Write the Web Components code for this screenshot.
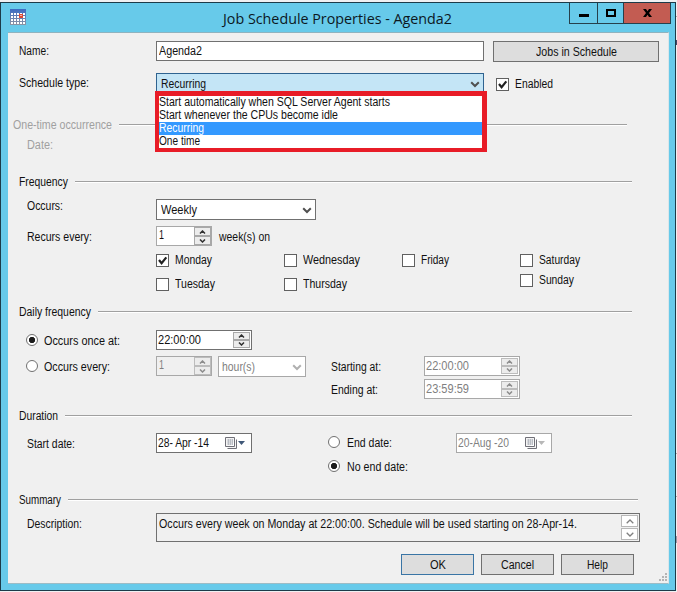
<!DOCTYPE html>
<html lang="en"><head><meta charset="utf-8"><title>Job Schedule Properties - Agenda2</title>
<style>
html,body{margin:0;width:677px;height:592px;overflow:hidden;background:#f0f0f2}
body{font:12px/16px "Liberation Sans",Arial,sans-serif;color:#111}
</style></head><body>
<dialog-window>
<title-bar slot="title"><fit-text w="229">Job Schedule Properties - Agenda2</fit-text></title-bar>
<form-row style="height:32px;margin-top:8px">
 <fit-text w="30" col="137" style="margin:2px 0 0 11px">Name:</fit-text>
 <text-box style="width:328px;height:20px"><fit-text w="43">Agenda2</fit-text></text-box>
 <push-button style="width:166px;margin-left:9px"><fit-text w="81">Jobs in Schedule</fit-text></push-button>
</form-row>
<form-row style="height:44px">
 <fit-text w="70" col="137" style="margin:2px 0 0 11px">Schedule type:</fit-text>
 <drop-down open style="width:328px"><fit-text w="45">Recurring</fit-text>
  <option-list slot="list">
   <list-option><fit-text w="231">Start automatically when SQL Server Agent starts</fit-text></list-option>
   <list-option><fit-text w="179">Start whenever the CPUs become idle</fit-text></list-option>
   <list-option selected><fit-text w="45">Recurring</fit-text></list-option>
   <list-option><fit-text w="41">One time</fit-text></list-option>
  </option-list></drop-down>
 <check-box checked style="margin:5px 0 0 12px"><fit-text w="38">Enabled</fit-text></check-box>
</form-row>
<section-head style="margin-left:5px;width:614px;color:#a0a0a0"><fit-text w="99">One-time occurrence</fit-text></section-head>
<form-row style="height:41px;color:#a0a0a0"><fit-text w="26" style="margin:4px 0 0 19px">Date:</fit-text></form-row>
<section-head><fit-text w="49">Frequency</fit-text></section-head>
<form-row style="height:27px;margin-top:9px">
 <fit-text w="36" col="129" style="margin:-1px 0 0 19px">Occurs:</fit-text>
 <drop-down style="width:160px"><fit-text w="36">Weekly</fit-text></drop-down>
</form-row>
<form-row style="height:28px">
 <fit-text w="65" col="129" style="margin:3px 0 0 19px">Recurs every:</fit-text>
 <spin-box class="num"><fit-text w="5">1</fit-text></spin-box>
 <fit-text w="51" style="margin:3px 0 0 7px">week(s) on</fit-text>
</form-row>
<day-grid style="margin-left:148px">
 <check-box checked><fit-text w="37">Monday</fit-text></check-box>
 <check-box><fit-text w="57">Wednesday</fit-text></check-box>
 <check-box><fit-text w="28">Friday</fit-text></check-box>
 <check-box><fit-text w="41">Saturday</fit-text></check-box>
 <check-box style="margin-top:4px"><fit-text w="40">Tuesday</fit-text></check-box>
 <check-box style="margin-top:4px"><fit-text w="44">Thursday</fit-text></check-box>
 <span></span>
 <check-box><fit-text w="35">Sunday</fit-text></check-box>
</day-grid>
<section-head><fit-text w="72">Daily frequency</fit-text></section-head>
<form-row style="height:26px;margin-top:10px">
 <radio-button checked style="width:130px;margin:2px 0 0 18px"><fit-text w="76">Occurs once at:</fit-text></radio-button>
 <spin-box class="time"><fit-text w="43">22:00:00</fit-text></spin-box>
</form-row>
<form-row style="height:23px">
 <radio-button style="width:130px;margin:2px 0 0 18px"><fit-text w="66">Occurs every:</fit-text></radio-button>
 <spin-box class="num" disabled style="--fill:#f0f0f0"><fit-text w="5">1</fit-text></spin-box>
 <drop-down disabled style="width:88px;margin-left:6px"><fit-text w="33">hour(s)</fit-text></drop-down>
 <fit-text w="50" col="93" style="margin:3px 0 0 25px">Starting at:</fit-text>
 <spin-box class="time" disabled><fit-text w="43">22:00:00</fit-text></spin-box>
</form-row>
<form-row style="height:29px">
 <fit-text w="47" col="93" style="margin:3px 0 0 323px">Ending at:</fit-text>
 <spin-box class="time" disabled><fit-text w="43">23:59:59</fit-text></spin-box>
</form-row>
<section-head><fit-text w="39">Duration</fit-text></section-head>
<form-row style="height:25px;margin-top:9px">
 <fit-text w="48" col="129" style="margin:3px 0 0 19px">Start date:</fit-text>
 <date-box><fit-text w="51">28- Apr -14</fit-text></date-box>
 <radio-button style="width:128px;margin:1px 0 0 76px;--gap:7px"><fit-text w="45">End date:</fit-text></radio-button>
 <date-box disabled><fit-text w="51">20-Aug -20</fit-text></date-box>
</form-row>
<form-row style="height:34px"><radio-button checked style="margin:0 0 0 320px;--gap:7px"><fit-text w="61">No end date:</fit-text></radio-button></form-row>
<section-head style="width:619px"><fit-text w="42">Summary</fit-text></section-head>
<form-row style="height:41px;margin-top:5px">
 <fit-text w="55" col="129" style="margin:3px 0 0 19px">Description:</fit-text>
 <summary-box><fit-text w="418">Occurs every week on Monday at 22:00:00. Schedule will be used starting on 28-Apr-14.</fit-text></summary-box>
</form-row>
<form-row style="gap:7px;margin-left:393px">
 <push-button default style="width:73px"><fit-text w="16">OK</fit-text></push-button>
 <push-button style="width:73px"><fit-text w="33">Cancel</fit-text></push-button>
 <push-button style="width:73px"><fit-text w="21">Help</fit-text></push-button>
</form-row>
</dialog-window>
<script>
const define=(name,css,html,ready)=>customElements.define(name,class extends HTMLElement{
 constructor(){super();this.attachShadow({mode:'open'}).innerHTML=`<style>*{box-sizing:border-box}:host{box-sizing:border-box}${css}</style>${html}`}
 connectedCallback(){if(ready)ready(this,this.shadowRoot)}
});
const chevron='<svg width="10" height="7" viewBox="0 0 10 7"><path d="M1.2 1.2L5 5L8.8 1.2" fill="none" stroke="currentColor" stroke-width="2"/></svg>';

define('dialog-window',`:host{display:flex;flex-direction:column;width:677px;height:592px;padding-top:2px;
 background:linear-gradient(#0000 16px,#aaa 16px 17px,#0000 17px 40px,#446 40px 45px,#0000 45px 453px,#aaa 453px 454px,#0000 454px 496px,#aaa 496px 497px,#0000 497px 536px,#99a 536px 543px,#0000 543px) 676px 0/1px 592px no-repeat}
 .frame{width:676px;height:589px;border:1px solid #1c3b49;background:#67caea;display:flex;flex-direction:column}
 main{position:relative;width:661px;height:552px;margin:0 0 0 7px;border-top:1px solid #8fb3bf;border-bottom:1px solid #9cbcc6;background:#f0f0f0;border-right:1px solid #d9e6ea}
 .grip{position:absolute;right:1px;bottom:1px}`,
 `<div class="frame"><slot name="title"></slot><main><slot></slot><svg class="grip" width="9" height="9" fill="#b4b4b4"><path d="M7 0h2v2H7zM7 3h2v2H7zM4 3h2v2H4zM7 6h2v2H7zM4 6h2v2H4zM1 6h2v2H1z"/></svg></main></div>`);

define('title-bar',`:host{display:flex;height:29px;flex:none;font:15px/20px "Open Sans","Noto Sans",sans-serif;color:#0c181e}
 .icon{margin:6px 0 0 9px;width:16px}.text{margin:5px 0 0 197px;width:346px}
 .controls{display:flex;height:21px;border:1px solid #26404b;border-top:0}
 .controls span{display:flex;align-items:center;justify-content:center;border-left:1px solid #26404b}.controls span:first-child{border:0}
 svg{display:block}`,
 `<div class="icon"><svg width="16" height="16"><defs><linearGradient id="g" x2="0" y2="1"><stop stop-color="#3c6cc4"/><stop offset="1" stop-color="#8d94a2"/></linearGradient></defs><rect width="16" height="16" fill="url(#g)"/><path fill="#fff" d="M1 4h2v2H1zM4 4h2v2H4zM7 4h2v2H7zM10 4h2v2h-2zM13 4h2v2h-2zM1 7h2v2H1zM4 7h2v2H4zM7 7h2v2H7zM13 7h2v2h-2zM1 10h2v2H1zM4 10h2v2H4zM7 10h2v2H7zM10 10h2v2h-2zM13 10h2v2h-2zM1 13h2v2H1zM4 13h2v2H4zM7 13h2v2H7zM10 13h2v2h-2zM13 13h2v2h-2z"/><path fill="#dc4b35" d="M9 5h4v4H9z"/><path fill="#f3b6a8" d="M10 6h2v1h-2z"/></svg></div>
 <div class="text"><slot></slot></div>
 <div class="controls"><span style="width:27px"><svg width="10" height="3" style="margin-top:4px"><path d="M0 0h10v3H0z"/></svg></span><span style="width:26px"><svg width="10" height="8"><path d="M1 1h8v6H1z" fill="none" stroke="#000" stroke-width="2"/></svg></span><span style="width:47px;background:#c35c52"><svg width="9" height="8"><path d="M0 0h3L4.500 2.200 6 0h3L6 4l3 4H6L4.500 5.800 3 8H0l3-4z"/></svg></span></div>`);

/* Label squeezed or stretched to the w attribute; col reserves a wider column. */
define('fit-text',':host{display:block;flex:none;white-space:pre}span{display:inline-block;transform-origin:0 0}','<span><slot></slot></span>',(el,root)=>{
 const s=root.querySelector('span'),w=+el.getAttribute('w');
 el.style.width=(el.getAttribute('col')||w)+'px';
 const fit=()=>{const n=s.offsetWidth;s.style.transform='';const r=s.getBoundingClientRect().width||n;s.style.transform=`scaleX(${w/r})`};
 requestAnimationFrame(fit);fit();
});
define('form-row',':host{display:flex;align-items:flex-start}','<slot></slot>');
define('section-head',':host{display:flex;align-items:center;gap:7px;width:613px;height:16px;margin-left:11px}i{flex:1;height:2px;margin-top:-1px;background:linear-gradient(#a0a0a0 50%,#fff 50%)}','<slot></slot><i></i>');
define('text-box',':host{display:flex;border:1px solid #707070;background:#fff;padding:1px 2px}','<slot></slot>');
define('push-button',':host{display:flex;justify-content:center;align-items:center;height:21px;border:1px solid #707070;background:#ddd;padding-top:1px}:host([default]){border-color:#3a75a5}','<slot></slot>');
define('drop-down',`:host{position:relative;display:flex;justify-content:space-between;height:21px;border:1px solid #707070;background:#fff;padding:2px 3px 0 4px}
 :host([open]){background:#c4e5f6;border-color:#2f6390}:host([disabled]){border-color:#a8a8a8;color:#808080;padding-left:3px}
 svg{margin-top:5px;color:#505050}:host([disabled]) svg{color:#b0b0b0}
 ::slotted(option-list){position:absolute;left:-1px;top:17px;z-index:2}`,`<slot></slot>${chevron}<slot name="list"></slot>`);
define('option-list',':host{display:block;width:332px;height:61px;border:solid #e81c27;border-width:5px 5px 4px 4px;background:#fff;margin-left:-1px}','<slot></slot>');
define('list-option',':host{display:block;height:13px;line-height:13px;padding-left:1px}:host([selected]){background:#3399ff;color:#fff}::slotted(*){margin-left:-1px}','<slot></slot>');
define('check-box',':host{display:flex;height:13px}b{flex:none;width:13px;height:13px;margin-right:6px;border:1px solid #606060;background:#fff}svg{display:none}:host([checked]) svg{display:block}::slotted(*){margin-top:-2px}','<b><svg width="11" height="11"><path d="M2 5L4.600 8.200L9.300 2.400" fill="none" stroke="#202020" stroke-width="2.200"/></svg></b><slot></slot>');
define('day-grid',':host{display:grid;grid-template-columns:128px 118px 118px 100px;grid-template-rows:20px 30px}','<slot></slot>');
define('radio-button',':host{display:flex;height:17px}b{flex:none;width:12px;height:12px;margin:2px var(--gap,6px) 0 0;border:1px solid #707070;border-radius:50%;background:#fff}:host([checked]) b{background:radial-gradient(circle at center,#1c1c1c 2.800px,#fff 3.500px)}::slotted(*){margin-top:1px}','<b></b><slot></slot>');
define('spin-box',`:host{display:flex;justify-content:space-between;height:20px;width:96px;border:1px solid #707070;background:var(--fill,#fff);padding:1px 1px 1px 1px}
 :host(.num){width:56px;border-color:#a8a8a8;padding:0 0 0 2px}:host([disabled]){border-color:#a8a8a8;color:#808080}
 .b{display:flex;flex-direction:column;width:17px}.b i{flex:1;display:flex;align-items:center;justify-content:center;border:1px solid #a8a8a8;background:#ececec}
 :host([disabled]) .b i{border-color:#bcbcbc}
 svg{color:#303030}:host([disabled]) svg{color:#8c8c8c}`,
 '<slot></slot><div class="b"><i><svg width="7" height="4"><path d="M1 3.500L3.500 1 6 3.500" fill="none" stroke="currentColor" stroke-width="1.500"/></svg></i><i><svg width="7" height="4"><path d="M1 .5L3.500 3 6 .5" fill="none" stroke="currentColor" stroke-width="1.500"/></svg></i></div>');
define('date-box',':host{display:flex;width:96px;height:20px;border:1px solid #707070;background:#fff;padding:1px 1px}:host([disabled]){border-color:#a8a8a8;color:#808080}svg{margin:2px 0 0 16px;color:#405878}:host([disabled]) svg{color:#b8b8b8}','<slot></slot><svg width="22" height="13"><path d="M2.500 11.500h9V2.500M.5.500h9v9h-9z" fill="#f4f4f4" stroke="#707078"/><path d="M2 3h6M2 5h6M2 7h6M3.500 2v6M5.500 2v6M7.500 2v6" stroke="#b0b4bc" stroke-width=".8"/><path d="M13 4h7l-3.500 4z" fill="currentColor"/></svg>');
define('summary-box',':host{display:flex;justify-content:space-between;width:484px;height:29px;border:1px solid #707070;padding:1px 1px 1px 2px}.s{display:flex;flex-direction:column;width:17px;color:#808080}.s i{flex:1;border:1px solid #b8b8b8;background:#fff;display:flex;align-items:center;justify-content:center}.s i+i{margin-top:1px}::slotted(*){margin-top:1px}','<slot></slot><div class="s"><i><svg width="8" height="5"><path d="M.7 4.300L4 1l3.300 3.300" fill="none" stroke="currentColor" stroke-width="1.300"/></svg></i><i><svg width="8" height="5"><path d="M.7.700L4 4 7.300.700" fill="none" stroke="currentColor" stroke-width="1.300"/></svg></i></div>');
</script>
</body></html>
